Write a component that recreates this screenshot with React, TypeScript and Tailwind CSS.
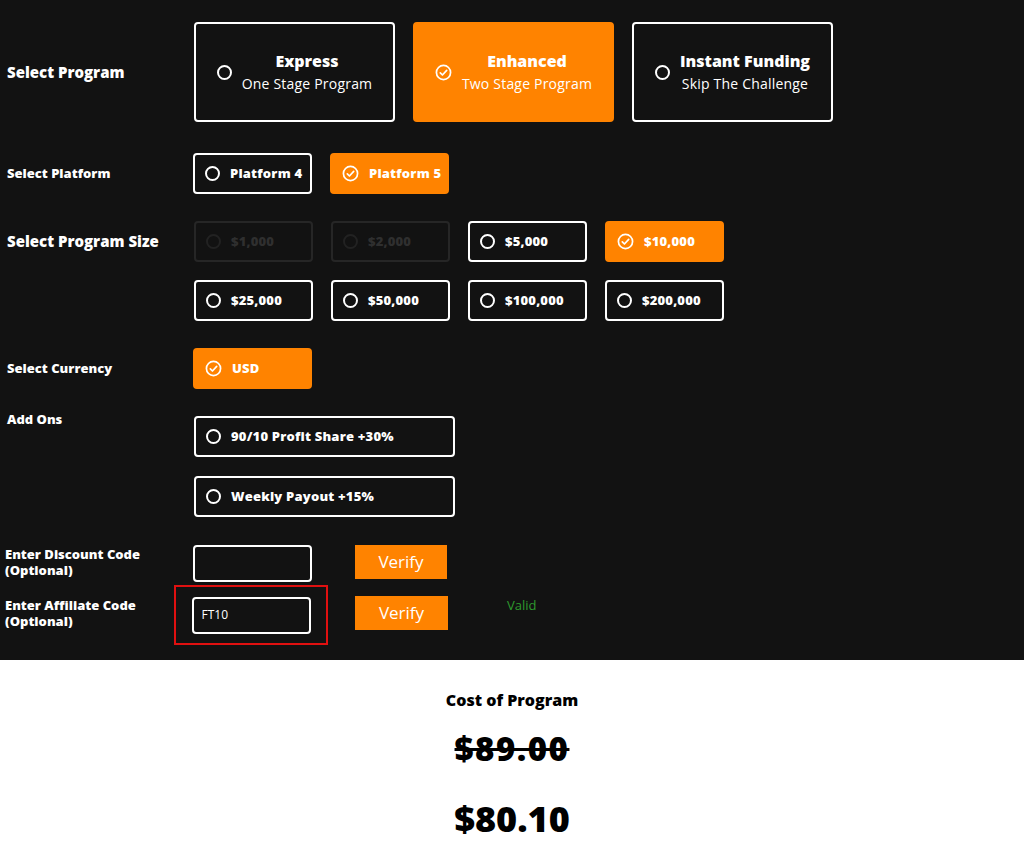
import React from "react";

const ORANGE = "bg-[#ff8300]";

const Radio = () => (
  <span className="inline-block w-[15px] h-[15px] rounded-full border-2 border-white shrink-0" />
);

const Check = () => (
  <svg width="17" height="17" viewBox="0 0 24 24" fill="none" stroke="white" strokeWidth="2.4" strokeLinecap="round" strokeLinejoin="round" className="shrink-0">
    <circle cx="12" cy="12" r="10" />
    <path d="M7.5 12.5l3 3 6-6.5" />
  </svg>
);

interface OptProps {
  label: string;
  active?: boolean;
  disabled?: boolean;
  wide?: boolean;
}

const Option: React.FC<OptProps> = ({ label, active, disabled, wide }) => {
  if (disabled) {
    return (
      <div className="w-[119px] h-[41px] rounded-[4px] border-2 border-[#262626] flex items-center gap-2.5 px-2.5 text-[13px] font-extrabold tracking-[0.2px] whitespace-nowrap text-[#2f2f2f]">
        <span className="inline-block w-[15px] h-[15px] rounded-full border-2 border-[#222] shrink-0" />
        {label}
      </div>
    );
  }
  return (
    <div
      className={`${wide ? "w-[261px]" : "w-[119px]"} h-[41px] rounded-[4px] flex items-center gap-2.5 px-2.5 text-[13px] font-extrabold tracking-[0.2px] whitespace-nowrap text-white ${
        active ? ORANGE + " border-2 border-[#ff8300]" : "border-2 border-white"
      }`}
    >
      {active ? <Check /> : <Radio />}
      {label}
    </div>
  );
};

const ProgramCard: React.FC<{ title: string; sub: string; active?: boolean }> = ({ title, sub, active }) => (
  <div
    className={`w-[201px] h-[100px] rounded-[4px] flex items-center justify-center gap-2.5 ${
      active ? "bg-[#ff8300] border-2 border-[#ff8300]" : "border-2 border-white"
    }`}
  >
    {active ? <Check /> : <Radio />}
    <div className="text-center text-white leading-tight whitespace-nowrap">
      <div className="text-[16px] font-extrabold">{title}</div>
      <div className="text-[14px] mt-1 tracking-[0.2px]">{sub}</div>
    </div>
  </div>
);

const Label: React.FC<{ children: React.ReactNode; big?: boolean }> = ({ children, big }) => (
  <div className={`w-[193px] shrink-0 pl-[7px] text-white font-extrabold whitespace-nowrap ${big ? "text-[15px]" : "text-[13px]"}`}>
    {children}
  </div>
);

export default function App() {
  return (
    <div className="w-[1024px] min-h-[853px] bg-white" style={{ fontFamily: "'Open Sans', 'Noto Sans', sans-serif" }}>
      <div className="bg-[#121212] h-[660px] pt-[22px]">
        {/* program */}
        <div className="flex items-center">
          <Label big>Select Program</Label>
          <div className="flex gap-[18px] pl-[1px]">
            <ProgramCard title="Express" sub="One Stage Program" />
            <ProgramCard title="Enhanced" sub="Two Stage Program" active />
            <ProgramCard title="Instant Funding" sub="Skip The Challenge" />
          </div>
        </div>

        {/* platform */}
        <div className="flex items-center mt-[31px]">
          <Label>Select Platform</Label>
          <div className="flex gap-[18px]">
            <Option label="Platform 4" />
            <Option label="Platform 5" active />
          </div>
        </div>

        {/* size */}
        <div className="flex mt-[27px]">
          <div className="h-[41px] flex items-center">
            <Label big>Select Program Size</Label>
          </div>
          <div className="grid grid-cols-[119px_119px_119px_119px] gap-x-[18px] gap-y-[18px] pl-[1px]">
            <Option label="$1,000" disabled />
            <Option label="$2,000" disabled />
            <Option label="$5,000" />
            <Option label="$10,000" active />
            <Option label="$25,000" />
            <Option label="$50,000" />
            <Option label="$100,000" />
            <Option label="$200,000" />
          </div>
        </div>

        {/* currency */}
        <div className="flex items-center mt-[27px]">
          <Label>Select Currency</Label>
          <Option label="USD" active />
        </div>

        {/* add ons */}
        <div className="flex mt-[27px]">
          <div className="-mt-[6px]">
            <Label>Add Ons</Label>
          </div>
          <div className="flex flex-col gap-[19px] pl-[1px]">
            <Option label="90/10 Profit Share +30%" wide />
            <Option label="Weekly Payout +15%" wide />
          </div>
        </div>

        {/* discount */}
        <div className="flex items-center mt-[28px]">
          <div className="w-[193px] shrink-0 pl-[5px] -mt-[4px] flex flex-col text-white font-extrabold text-[13px] leading-[16px] whitespace-nowrap">
            <span>Enter Discount Code</span>
            <span>(Optional)</span>
          </div>
          <div className="w-[119px] h-[37px] rounded-[4px] border-2 border-white" />
          <button className="ml-[43px] -mt-[4px] w-[92px] h-[34px] bg-[#ff8300] text-white text-[17px]">Verify</button>
        </div>

        {/* affiliate */}
        <div className="flex items-center mt-[3px]">
          <div className="w-[174px] shrink-0 pl-[5px] -mt-[4px] flex flex-col text-white font-extrabold text-[13px] leading-[16px] whitespace-nowrap">
            <span>Enter Affiliate Code</span>
            <span>(Optional)</span>
          </div>
          <div className="w-[154px] h-[60px] border-2 border-[#e01010] flex items-center justify-center">
            <div className="w-[119px] h-[37px] rounded-[4px] border-2 border-white flex items-center px-[8px] text-white text-[12px]">
              FT10
            </div>
          </div>
          <button className="ml-[27px] -mt-[4px] w-[93px] h-[34px] bg-[#ff8300] text-white text-[17px]">Verify</button>
          <span className="ml-[59px] -mt-[18px] text-[#2e9a2e] text-[13px]">Valid</span>
        </div>
      </div>

      <div className="flex flex-col items-center text-black font-extrabold">
        <div className="mt-[28px] text-[16px]">Cost of Program</div>
        <div className="mt-[12px] text-[33px] tracking-[1.5px] line-through decoration-[3px]">$89.00</div>
        <div className="mt-[18px] text-[36px]">$80.10</div>
      </div>
    </div>
  );
}
